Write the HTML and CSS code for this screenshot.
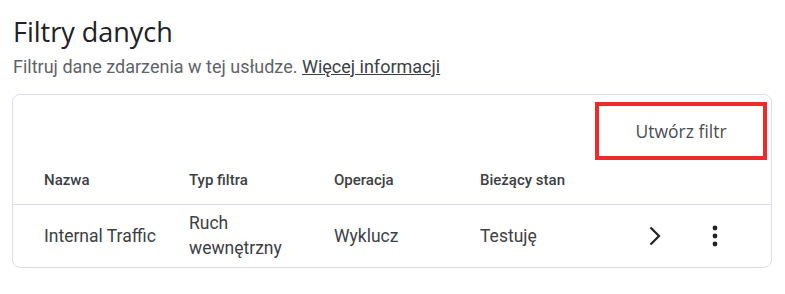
FILE: index.html
```html
<!DOCTYPE html>
<html lang="pl">
<head>
<meta charset="utf-8">
<title>Filtry danych</title>
<link rel="stylesheet" href="styles.css">
</head>
<body>
<div class="page">
  <h1 class="title">Filtry danych</h1>
  <p class="subtitle">Filtruj dane zdarzenia w tej usłudze. <a href="#" class="link">Więcej informacji</a></p>
  <div class="card">
    <div class="toolbar">
      <button class="create-btn">Utwórz filtr</button>
    </div>
    <div class="row head">
      <div class="cell">Nazwa</div>
      <div class="cell">Typ filtra</div>
      <div class="cell">Operacja</div>
      <div class="cell">Bieżący stan</div>
      <div class="cell"></div>
      <div class="cell"></div>
    </div>
    <div class="row data">
      <div class="cell">Internal Traffic</div>
      <div class="cell">Ruch<br>wewnętrzny</div>
      <div class="cell">Wyklucz</div>
      <div class="cell">Testuję</div>
      <div class="cell icon">
        <svg width="24" height="24" viewBox="0 0 24 24"><path d="M6.5 3.5 15 12 6.5 20.5" fill="none" stroke="#202124" stroke-width="2.2"/></svg>
      </div>
      <div class="cell icon">
        <svg width="24" height="24" viewBox="0 0 24 24"><circle cx="12" cy="4" r="2.4" fill="#202124"/><circle cx="12" cy="12" r="2.4" fill="#202124"/><circle cx="12" cy="20" r="2.4" fill="#202124"/></svg>
      </div>
    </div>
  </div>
</div>
</body>
</html>
```
FILE: styles.css
```css
html, body {
  margin: 0;
  padding: 0;
  background: #ffffff;
}
.page {
  padding: 15px 13px 0 12px;
  font-family: Roboto, "Liberation Sans", sans-serif;
}
.title {
  margin: 0 0 0 1px;
  font-family: "Open Sans", Roboto, sans-serif;
  font-weight: 400;
  font-size: 27px;
  line-height: 34px;
  color: #202124;
}
.subtitle {
  margin: 6px 0 0 1px;
  font-size: 18px;
  line-height: 24px;
  color: #5f6368;
}
.link {
  color: #3c4043;
  text-decoration: underline;
}
.card {
  margin-top: 15px;
  width: 760px;
  box-sizing: border-box;
  border: 1px solid #dcdcf4;
  border-radius: 8px;
  overflow: hidden;
}
.toolbar {
  display: flex;
  justify-content: flex-end;
  padding: 7px 4px 0 0;
}
.create-btn {
  width: 172px;
  height: 58px;
  box-sizing: border-box;
  border: 4px solid #ee2b2b;
  background: #fff;
  font-family: "Open Sans", Roboto, sans-serif;
  font-size: 17.5px;
  color: #4a4e52;
  padding: 0;
  margin: 0;
}
.row {
  display: grid;
  grid-template-columns: 145px 145px 146px 146px 60px 58px 1fr;
  padding-left: 31px;
  align-items: center;
}
.head {
  height: 45px;
  border-bottom: 1px solid #dcdcf4;
  font-size: 15px;
  font-weight: 500;
  color: #3c4043;
  padding-bottom: 5px;
  box-sizing: border-box;
}
.data {
  height: 62px;
  font-size: 17.5px;
  line-height: 25px;
  color: #3c4043;
}
.icon {
  display: flex;
  justify-content: center;
  align-items: center;
}
.icon svg {
  display: block;
}
```
